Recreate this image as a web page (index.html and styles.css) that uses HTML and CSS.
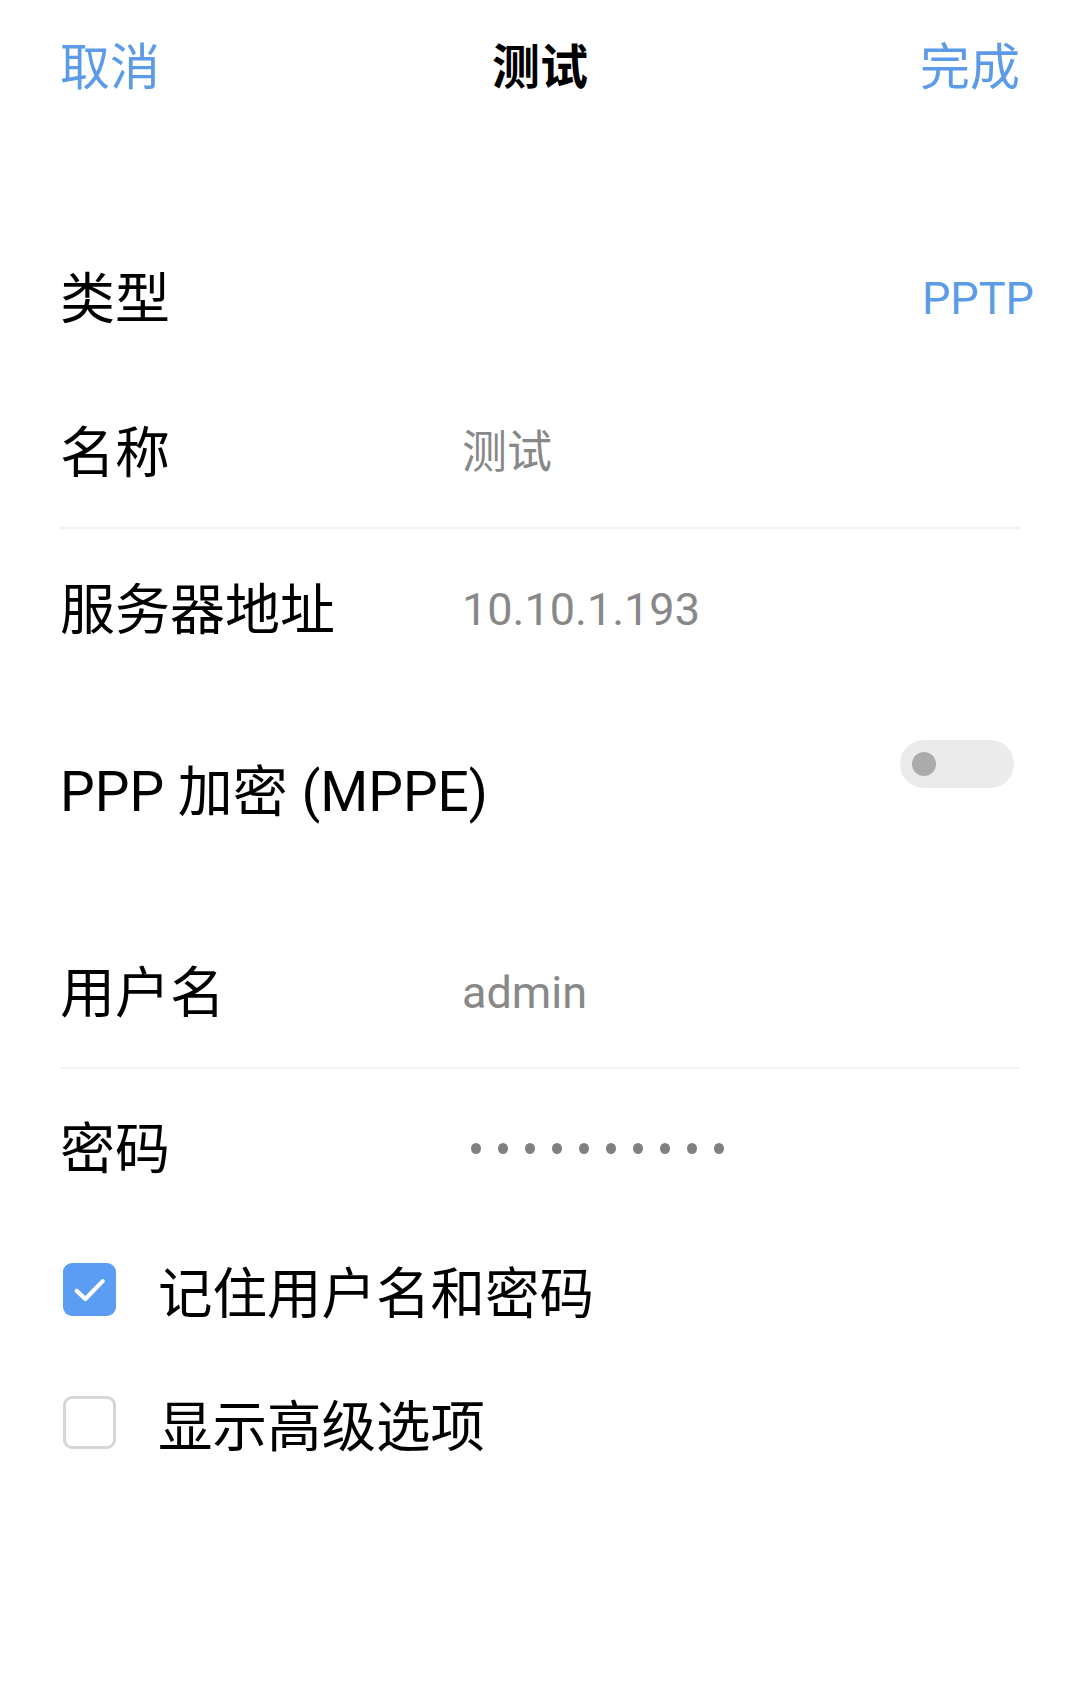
FILE: index.html
```html
<!DOCTYPE html>
<html lang="zh-CN">
<head>
<meta charset="utf-8">
<title>测试</title>
<link rel="stylesheet" href="styles.css">
</head>
<body>
<div class="page">
  <header class="topbar">
    <span class="nav-btn">取消</span>
    <span class="title">测试</span>
    <span class="nav-btn">完成</span>
  </header>

  <main class="form">
    <div class="row row-type">
      <span class="label">类型</span>
      <span class="type-value">PPTP</span>
    </div>
    <div class="row row-name">
      <span class="label">名称</span>
      <span class="value">测试</span>
    </div>
    <div class="divider"></div>
    <div class="row row-server">
      <span class="label">服务器地址</span>
      <span class="value">10.10.1.193</span>
    </div>
    <div class="row row-ppp">
      <span class="label label-ppp">PPP 加密 (MPPE)</span>
      <span class="toggle"><span class="knob"></span></span>
    </div>
    <div class="row row-user">
      <span class="label">用户名</span>
      <span class="value">admin</span>
    </div>
    <div class="divider"></div>
    <div class="row row-pass">
      <span class="label">密码</span>
      <span class="dots" aria-label="••••••••••">
        <span class="dot"></span><span class="dot"></span><span class="dot"></span><span class="dot"></span><span class="dot"></span><span class="dot"></span><span class="dot"></span><span class="dot"></span><span class="dot"></span><span class="dot"></span>
      </span>
    </div>
    <div class="check-row">
      <span class="checkbox checked">
        <svg viewBox="0 0 24 24" width="53" height="53"><path d="M6.2 12.6 L10.1 16.3 L18 8.2" fill="none" stroke="#ffffff" stroke-width="1.9" stroke-linecap="round" stroke-linejoin="round"/></svg>
      </span>
      <span class="check-label">记住用户名和密码</span>
    </div>
    <div class="check-row">
      <span class="checkbox"></span>
      <span class="check-label">显示高级选项</span>
    </div>
  </main>
</div>
</body>
</html>
```

FILE: styles.css
```css
html, body {
  margin: 0;
  padding: 0;
  background: #ffffff;
}

body {
  font-family: Roboto, "Noto Sans CJK SC", sans-serif;
  color: #000000;
  width: 1080px;
}

.page {
  width: 1080px;
}

.topbar {
  height: 134px;
  display: flex;
  align-items: center;
  justify-content: space-between;
  padding: 2px 60px 0 60px;
  box-sizing: border-box;
}

.nav-btn {
  font-size: 50px;
  line-height: 58px;
  color: #5c9be7;
}

.title {
  font-size: 48px;
  line-height: 56px;
  font-weight: 700;
  color: #000000;
}

.form {
  margin-top: 84px;
}

.row {
  display: flex;
  align-items: center;
  padding: 5px 60px 0 60px;
  box-sizing: border-box;
}

.label {
  width: 402px;
  flex: none;
  font-size: 55px;
  line-height: 60px;
  color: #000000;
}

.value {
  font-size: 45px;
  line-height: 56px;
  color: #888888;
}

.row-type {
  height: 156px;
  justify-content: space-between;
  padding-right: 46px;
}

.type-value {
  font-size: 45px;
  line-height: 56px;
  color: #5c9be7;
}

.row-name {
  height: 153px;
}

.divider {
  height: 2px;
  margin: 0 60px;
  background: #f3f3f3;
}

.row-server {
  height: 157px;
}

.row-ppp {
  height: 228px;
  align-items: flex-start;
  justify-content: space-between;
  padding-top: 0;
  padding-right: 66px;
}

.label-ppp {
  width: auto;
  margin-top: 76px;
}

.toggle {
  margin-top: 54px;
  width: 114px;
  height: 48px;
  border-radius: 24px;
  background: #ebebeb;
  display: flex;
  align-items: center;
  padding-left: 12px;
  box-sizing: border-box;
}

.knob {
  width: 24px;
  height: 24px;
  border-radius: 50%;
  background: #ababab;
}

.row-user {
  height: 153px;
}

.row-pass {
  height: 154px;
}

.dots {
  display: flex;
  gap: 17px;
  padding-left: 9px;
}

.dot {
  width: 10px;
  height: 11px;
  border-radius: 50%;
  background: #808080;
}

.check-row {
  height: 133px;
  display: flex;
  align-items: center;
  padding-left: 63px;
}

.checkbox {
  width: 53px;
  height: 53px;
  flex: none;
  box-sizing: border-box;
  border-radius: 9px;
  border: 3px solid #d6d6d6;
  margin-right: 42px;
  display: flex;
  align-items: center;
  justify-content: center;
}

.checkbox.checked {
  border: none;
  background: #5b9df3;
}

.check-label {
  font-size: 54.5px;
  line-height: 60px;
  margin-top: 8px;
  color: #000000;
}
```
